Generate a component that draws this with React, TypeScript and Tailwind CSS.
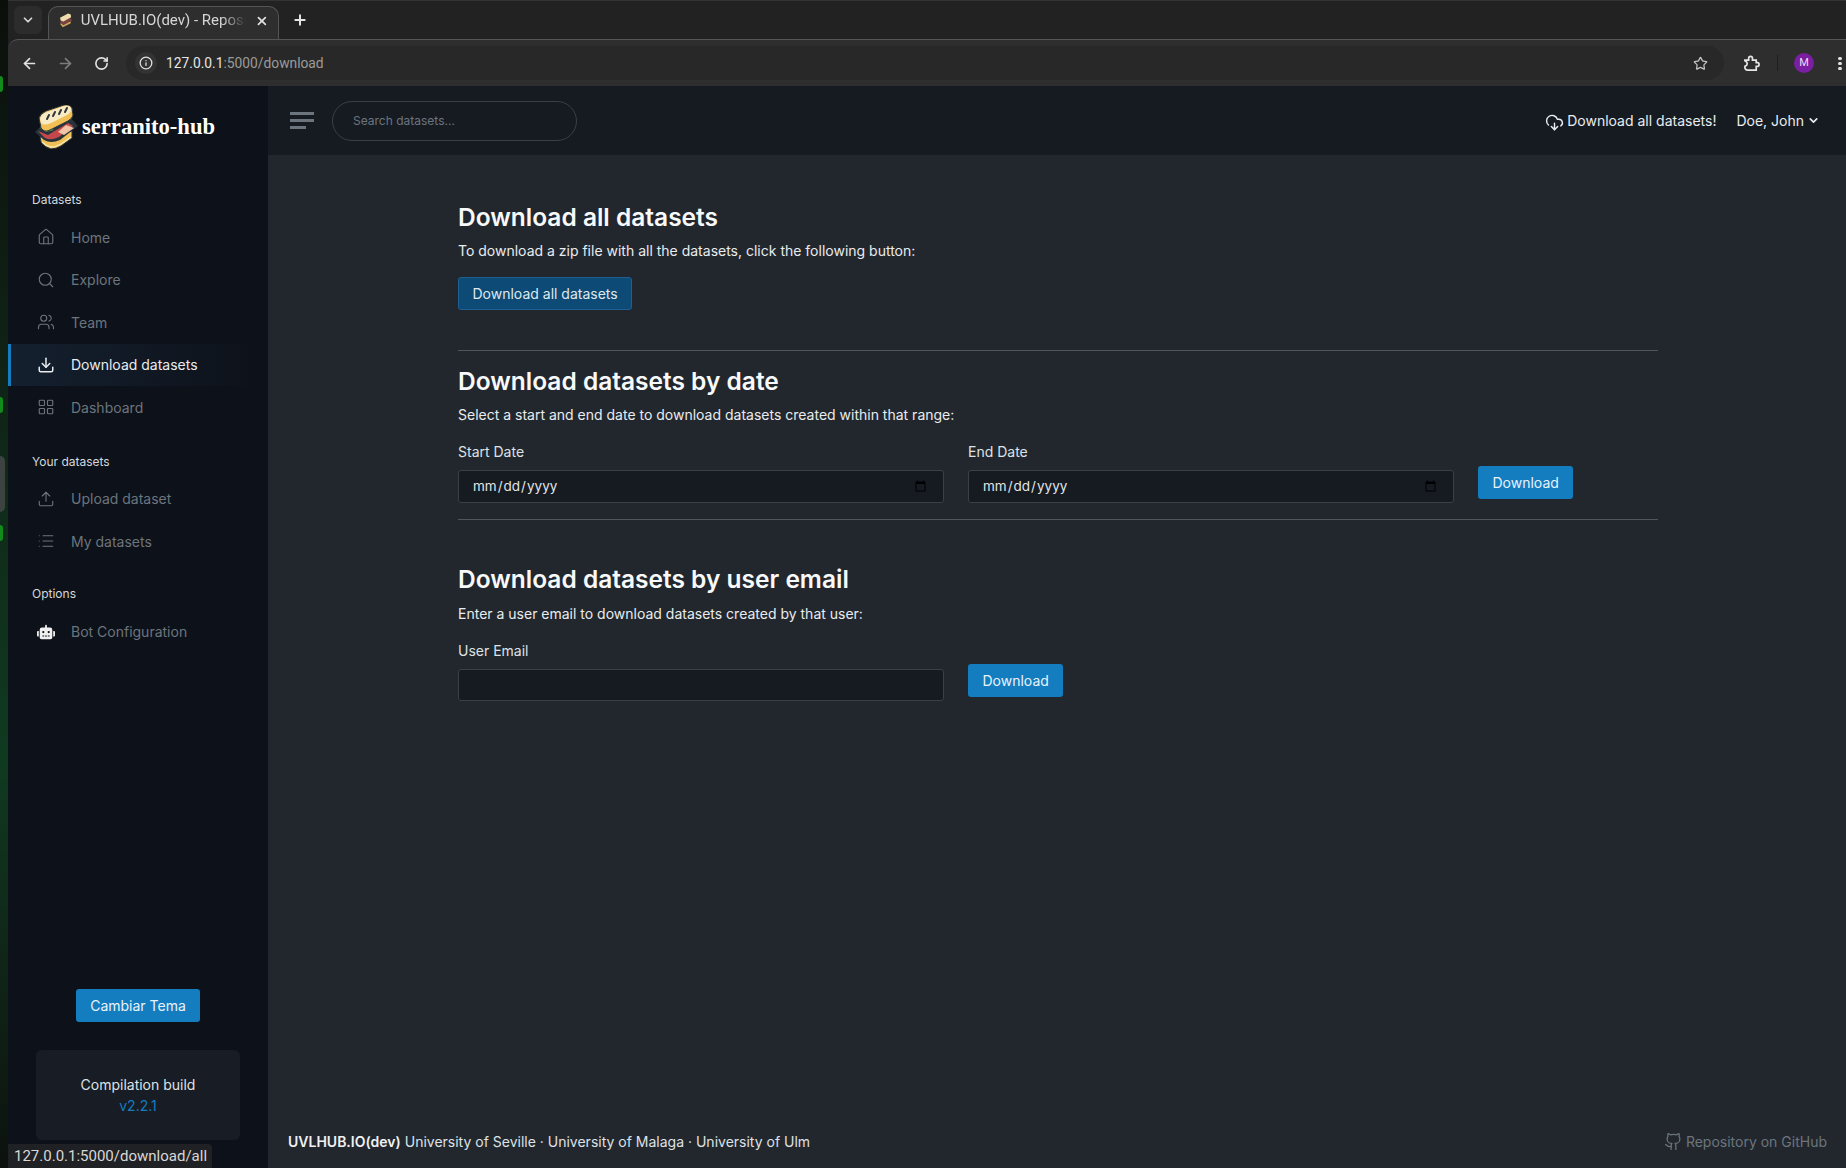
import { ArrowLeft, ArrowRight, RotateCw, Info, Star, X, Plus, ChevronDown, Home, Search, Users, Download, LayoutGrid, Upload, List, CloudDownload, Github } from "lucide-react";
import { FaRobot } from "react-icons/fa";

const NavItem = ({ icon, label, active }: { icon: React.ReactNode; label: string; active?: boolean }) => (
  <div
    className={`h-[42.5px] flex items-center pl-[26px] border-l-[3px] text-[14px] ${
      active
        ? "border-[#137dc0] text-[#e9ecef] bg-gradient-to-r from-[#14202f] to-[#0d1119]"
        : "border-transparent text-[#6c757d]"
    }`}
  >
    <span className="w-[18px] flex justify-center mr-[16px]">{icon}</span>
    {label}
  </div>
);

const Sandwich = () => (
  <svg viewBox="0 0 44 44" className="w-[44px] h-[44px] mr-[4px]">
    <path d="M6 32 L7 37 Q10 42 17 44 Q22 44 27 41 L38 33 L38 26 Z" fill="#f0bf55" stroke="#27343c" strokeWidth="1" />
    <path d="M8 37 Q12 41 17 42 Q22 42 27 39 L37 32" fill="none" stroke="#f8e6b4" strokeWidth="1.4" />
    <path d="M1 27 L10 18 L36 12 L44 21 L26 35 Q17 39 10 35 Z" fill="#27333b" />
    <path d="M4 26 L14 30 L34 18 L39 21 L25 32 Q17 36 11 33 Z" fill="#c4474b" />
    <path d="M24 27 L32 20 L40 23 L30 30 Z" fill="#f0c3a6" />
    <path d="M6 23 L12 27 L20 25 L11 19 Z" fill="#5f9a4c" />
    <path d="M5 13 Q6 9 12 6 L30 0 Q36 -1 38 3 L39 10 Q39 13 34 16 L16 25 Q10 28 7 23 Z" fill="#f2bf55" stroke="#27343c" strokeWidth="1" />
    <path d="M6 14 Q7 9 13 7 L30 1 Q35 0 37 3 Q38 7 33 10 L17 18 Q10 21 7 18 Z" fill="#f7ebc6" />
    <path d="M13 14 L15 10 M19 11 L21 7 M25 9 L27 5 M31 7 L33 3" stroke="#33363a" strokeWidth="2" strokeLinecap="round" />
  </svg>
);

const Heading = ({ children }: { children: React.ReactNode }) => (
  <h1 className="text-[24.5px] leading-[29px] font-semibold text-[#f8f9fa]">{children}</h1>
);

const Para = ({ children }: { children: React.ReactNode }) => (
  <p className="mt-[8px] text-[14px] leading-[21px] text-[#e9ecef]">{children}</p>
);

const DateField = ({ label }: { label: string }) => (
  <div className="w-[486px]">
    <label className="block text-[14px] leading-[21px] text-[#dee2e6] mb-[8px]">{label}</label>
    <input
      type="date"
      className="w-full h-[33px] pl-[13px] pr-[14px] rounded-[3px] border border-[#3b4046] bg-[#161a21] text-[13.5px] text-[#e2e5e8]"
    />
  </div>
);

const BlueButton = ({ children }: { children: React.ReactNode }) => (
  <button className="h-[33px] px-[14.5px] rounded-[3px] bg-[#137dc0] text-[14px] text-[#e9f2f9]">{children}</button>
);

export default function App() {
  return (
    <div className="w-[1846px] h-[1168px] overflow-hidden flex relative font-['Inter',sans-serif] bg-[#202124]">
      {/* desktop wallpaper behind the window */}
      <div className="w-[8px] shrink-0 relative bg-gradient-to-b from-[#0b0f0c] via-[#0f3a20] via-65% to-[#0c120e]">
        <span className="absolute left-0 top-[76px] w-[3px] h-[16px] rounded-r-full bg-[#128a1c]" />
        <span className="absolute left-0 top-[397px] w-[3px] h-[16px] rounded-r-full bg-[#128a1c]" />
        <span className="absolute left-0 top-[525px] w-[3px] h-[16px] rounded-r-full bg-[#128a1c]" />
        <span className="absolute left-0 top-[456px] w-[5px] h-[56px] rounded-r-[6px] bg-[#3c4340]" />
      </div>

      <div className="flex-1 flex flex-col min-w-0">
        {/* browser tabs */}
        <div className="h-[39px] shrink-0 flex items-end bg-[#222222] border-t border-[#333] font-['Roboto',sans-serif]">
          <div className="w-[28px] h-[28px] ml-[6px] mb-[5px] flex items-center justify-center rounded-[6px] bg-[#2c2c2c] text-[#d8d8d8]">
            <ChevronDown size={14} strokeWidth={3} />
          </div>
          <div className="ml-[6px] w-[231px] h-[33px] flex items-center pl-[9px] pr-[9px] pb-[5px] bg-[#2e2e2e] rounded-t-[10px] border border-b-0 border-[#555]">
            <svg viewBox="0 0 44 44" className="w-[15px] h-[15px] mr-[8px]">
              <path d="M6 32 L14 42 L38 30 L38 24 Z" fill="#c8a95a" />
              <path d="M4 26 L36 14 L42 22 L16 36 Z" fill="#7b4040" />
              <path d="M6 14 L30 1 L38 4 L39 12 L16 25 L8 22 Z" fill="#ecdcae" />
            </svg>
            <span className="text-[15px] text-[#d6d6d6] w-[168px] overflow-hidden whitespace-nowrap [mask-image:linear-gradient(to_right,black_85%,transparent)]">
              UVLHUB.IO(dev) - Repository
            </span>
            <X size={14} strokeWidth={3} className="ml-[9px] text-[#e0e0e0]" />
          </div>
          <Plus size={16} strokeWidth={3} className="ml-[13px] mb-[11px] text-[#e4e4e4]" />
        </div>

        {/* browser toolbar */}
        <div className="h-[47px] shrink-0 flex items-center bg-[#2e2e2e] border-t border-[#555] rounded-tl-[10px] font-['Roboto',sans-serif]">
          <ArrowLeft size={17} strokeWidth={2.4} className="ml-[13px] text-[#e2e2e2]" />
          <ArrowRight size={17} strokeWidth={2.4} className="ml-[19px] text-[#7c7c7c]" />
          <RotateCw size={15} strokeWidth={2.6} className="ml-[20px] text-[#e2e2e2]" />
          <div className="ml-[17px] flex-1 h-[34px] flex items-center rounded-full bg-[#282828] pl-[9px]">
            <span className="w-[22px] h-[22px] flex items-center justify-center rounded-full bg-[#333]">
              <Info size={14} strokeWidth={2.2} className="text-[#e2e2e2]" />
            </span>
            <span className="ml-[9px] text-[13.8px] text-[#e6e6e6]">
              127.0.0.1<span className="text-[#9b9b9b]">:5000/download</span>
            </span>
            <Star size={15} strokeWidth={2} className="ml-auto mr-[16px] text-[#c4c4c4]" />
          </div>
          <svg viewBox="0 0 18 18" className="ml-[19px] w-[17px] h-[17px] fill-none stroke-[#e6e6e6] stroke-[1.8]">
            <path d="M2 5.5 H6 V3.5 Q6 1.5 8 1.5 Q10 1.5 10 3.5 V5.5 H14 V8 H15.5 Q17 8 17 10 Q17 12 15.5 12 H14 V16 H5 Q2 16 2 13 V12 Q4.5 11 4.5 9 Q4.5 7 2 6 Z" />
          </svg>
          <div className="ml-[17px] w-[1px] h-[16px] bg-[#1f1f1f]" />
          <span className="ml-[16px] w-[20px] h-[20px] rounded-full bg-[#7b1fa2] flex items-center justify-center text-[11px] text-[#ecdcf2]">M</span>
          <span className="ml-[24px] w-[4px] flex flex-col gap-[2px]">
            <i className="w-[4px] h-[3px] rounded-full bg-[#e2e2e2]" />
            <i className="w-[4px] h-[3px] rounded-full bg-[#e2e2e2]" />
            <i className="w-[4px] h-[3px] rounded-full bg-[#e2e2e2]" />
          </span>
          <span className="w-[4px]" />
        </div>

        <div className="flex-1 flex min-h-0">
          {/* sidebar */}
          <aside className="w-[260px] shrink-0 bg-[#0d1119] flex flex-col">
            <div className="h-[69px] flex items-center pl-[26px] pt-[12px]">
              <Sandwich />
              <span className="font-['Liberation_Serif',serif] font-bold text-[22.6px] text-white">serranito-hub</span>
            </div>
            <div className="pl-[24px] mt-[36px] mb-[7px] text-[12px] leading-[18px] text-[#d5d9dd]">Datasets</div>
            <NavItem icon={<Home size={18} strokeWidth={1.5} />} label="Home" />
            <NavItem icon={<Search size={18} strokeWidth={1.5} />} label="Explore" />
            <NavItem icon={<Users size={18} strokeWidth={1.5} />} label="Team" />
            <NavItem icon={<Download size={18} strokeWidth={2} className="text-[#e9ecef]" />} label="Download datasets" active />
            <NavItem icon={<LayoutGrid size={18} strokeWidth={1.5} />} label="Dashboard" />
            <div className="pl-[24px] mt-[24px] mb-[7px] text-[12px] leading-[18px] text-[#d5d9dd]">Your datasets</div>
            <NavItem icon={<Upload size={18} strokeWidth={1.5} />} label="Upload dataset" />
            <NavItem icon={<List size={18} strokeWidth={1.5} />} label="My datasets" />
            <div className="pl-[24px] mt-[22px] mb-[8px] text-[12px] leading-[18px] text-[#d5d9dd]">Options</div>
            <NavItem icon={<FaRobot size={18} className="text-[#f0f0f0]" />} label="Bot Configuration" />

            <div className="mt-auto flex flex-col items-center pb-[28px]">
              <BlueButton>Cambiar Tema</BlueButton>
              <div className="mt-[28px] w-[204px] h-[90px] rounded-[6px] bg-[#181c24] flex flex-col items-center justify-center text-[14px] leading-[21px]">
                <span className="text-[#dee2e6]">Compilation build</span>
                <span className="text-[#137dc0]">v2.2.1</span>
              </div>
            </div>
          </aside>

          {/* main */}
          <div className="flex-1 flex flex-col bg-[#22272e] min-w-0">
            <header className="h-[69px] shrink-0 bg-[#161b22] flex items-center pl-[22px] pr-[26px]">
              <span className="flex flex-col gap-[4px] w-[24px]">
                <i className="h-[3px] w-[24px] bg-[#6c757d]" />
                <i className="h-[3px] w-[24px] bg-[#6c757d]" />
                <i className="h-[3px] w-[16px] bg-[#6c757d]" />
              </span>
              <div className="ml-[18px] w-[245px] h-[40px] rounded-full border border-[#3a3f46] flex items-center pl-[20px] text-[12px] text-[#6c757d]">
                Search datasets...
              </div>
              <div className="ml-auto flex items-center text-[14px] text-[#e9ecef]">
                <CloudDownload size={19} strokeWidth={1.8} className="mr-[3px] mt-[3px]" />
                <span>Download all datasets!</span>
                <span className="ml-[20px]">Doe, John</span>
                <ChevronDown size={13} strokeWidth={3} className="ml-[3px]" />
              </div>
            </header>

            <main className="flex-1 pt-[48px] pl-[190px] w-[1390px]">
              <Heading>Download all datasets</Heading>
              <Para>To download a zip file with all the datasets, click the following button:</Para>
              <button className="mt-[16px] h-[33px] px-[13.5px] rounded-[3px] border border-[#1e5f95] bg-[#0d4a75] text-[14px] text-[#dfe9f0]">
                Download all datasets
              </button>

              <hr className="mt-[40px] border-t border-[#52565c]" />

              <div className="mt-[16px]">
                <Heading>Download datasets by date</Heading>
              </div>
              <Para>Select a start and end date to download datasets created within that range:</Para>
              <div className="mt-[16px] flex items-start gap-[24px]">
                <DateField label="Start Date" />
                <DateField label="End Date" />
                <div className="pt-[25px]">
                  <BlueButton>Download</BlueButton>
                </div>
              </div>

              <hr className="mt-[16px] border-t border-[#52565c]" />

              <div className="mt-[45px] pb-[1px]">
                <Heading>Download datasets by user email</Heading>
              </div>
              <Para>Enter a user email to download datasets created by that user:</Para>
              <div className="mt-[16px] flex items-start gap-[24px]">
                <div className="w-[486px]">
                  <label className="block text-[14px] leading-[21px] text-[#dee2e6] mb-[8px]">User Email</label>
                  <input className="w-full h-[32px] px-[14px] rounded-[3px] border border-[#3b4046] bg-[#161a21] text-[14px]" />
                </div>
                <div className="pt-[24px]">
                  <BlueButton>Download</BlueButton>
                </div>
              </div>
            </main>

            <footer className="h-[54px] shrink-0 flex items-start pl-[20px] pr-[19px] pt-[17px] text-[14px] leading-[21px] text-[#dee2e6]">
              <span>
                <b className="font-semibold text-[#f0f1f3]">UVLHUB.IO(dev)</b> University of Seville · University of Malaga · University of Ulm
              </span>
              <span className="ml-auto flex items-center text-[#6c757d]">
                <Github size={19} strokeWidth={1.6} className="mr-[3px]" />
                Repository on GitHub
              </span>
            </footer>
          </div>
        </div>
      </div>

      {/* link hover status bubble */}
      <div className="absolute left-[8px] bottom-0 h-[24px] w-[204px] pl-[6px] flex items-center rounded-tr-[4px] bg-[#202124] text-[15px] text-[#d8d8d8] font-['Roboto',sans-serif]">
        127.0.0.1:5000/download/all
      </div>
    </div>
  );
}
